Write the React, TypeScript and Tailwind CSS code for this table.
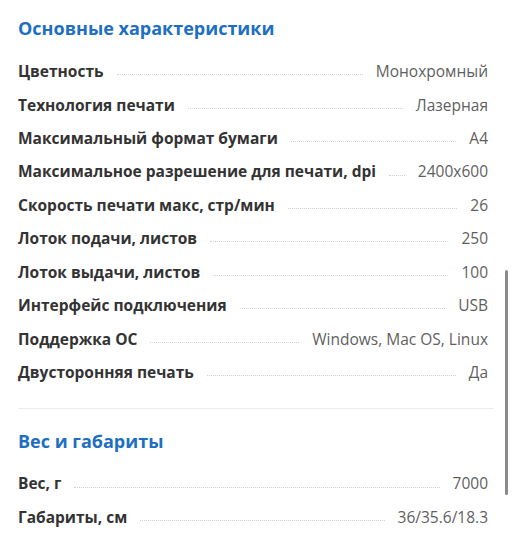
import React from "react";

const main: [string, string][] = [
  ["Цветность", "Монохромный"],
  ["Технология печати", "Лазерная"],
  ["Максимальный формат бумаги", "A4"],
  ["Максимальное разрешение для печати, dpi", "2400x600"],
  ["Скорость печати макс, стр/мин", "26"],
  ["Лоток подачи, листов", "250"],
  ["Лоток выдачи, листов", "100"],
  ["Интерфейс подключения", "USB"],
  ["Поддержка ОС", "Windows, Mac OS, Linux"],
  ["Двусторонняя печать", "Да"],
];

const dims: [string, string][] = [
  ["Вес, г", "7000"],
  ["Габариты, см", "36/35.6/18.3"],
];

function Row({ label, value }: { label: string; value: string }) {
  return (
    <div className="flex h-[33.45px] items-center">
      <span className="whitespace-nowrap text-[15.5px] font-bold text-[#333333]">{label}</span>
      <span className="mx-[13px] mt-[6px] h-0 flex-1 border-b border-dotted border-[#d0d0d0]" />
      <span className="whitespace-nowrap text-[15.5px] text-[#5f5f5f]">{value}</span>
    </div>
  );
}

export default function App() {
  return (
    <div
      className="relative h-[540px] w-[512px] overflow-hidden bg-white"
      style={{ fontFamily: '"Open Sans", "Noto Sans", sans-serif' }}
    >
      <div className="pl-[18px] pr-[24px]">
        <h2 className="pt-[15px] text-[18px] font-bold leading-[26px] text-[#1e6fc2]">
          Основные характеристики
        </h2>
        <div className="mt-[14px]">
          {main.map(([l, v]) => (
            <Row key={l} label={l} value={v} />
          ))}
        </div>
        <div className="mt-[19px] h-px bg-[#ececec] -mr-[6px]" />
        <h2 className="mt-[19px] text-[18px] font-bold leading-[26px] text-[#1e6fc2]">
          Вес и габариты
        </h2>
        <div className="mt-[13px]">
          {dims.map(([l, v]) => (
            <Row key={l} label={l} value={v} />
          ))}
        </div>
      </div>
      <div className="absolute left-[505px] top-[270px] h-[225px] w-[3px] rounded-full bg-[#8a8a8a]" />
    </div>
  );
}
